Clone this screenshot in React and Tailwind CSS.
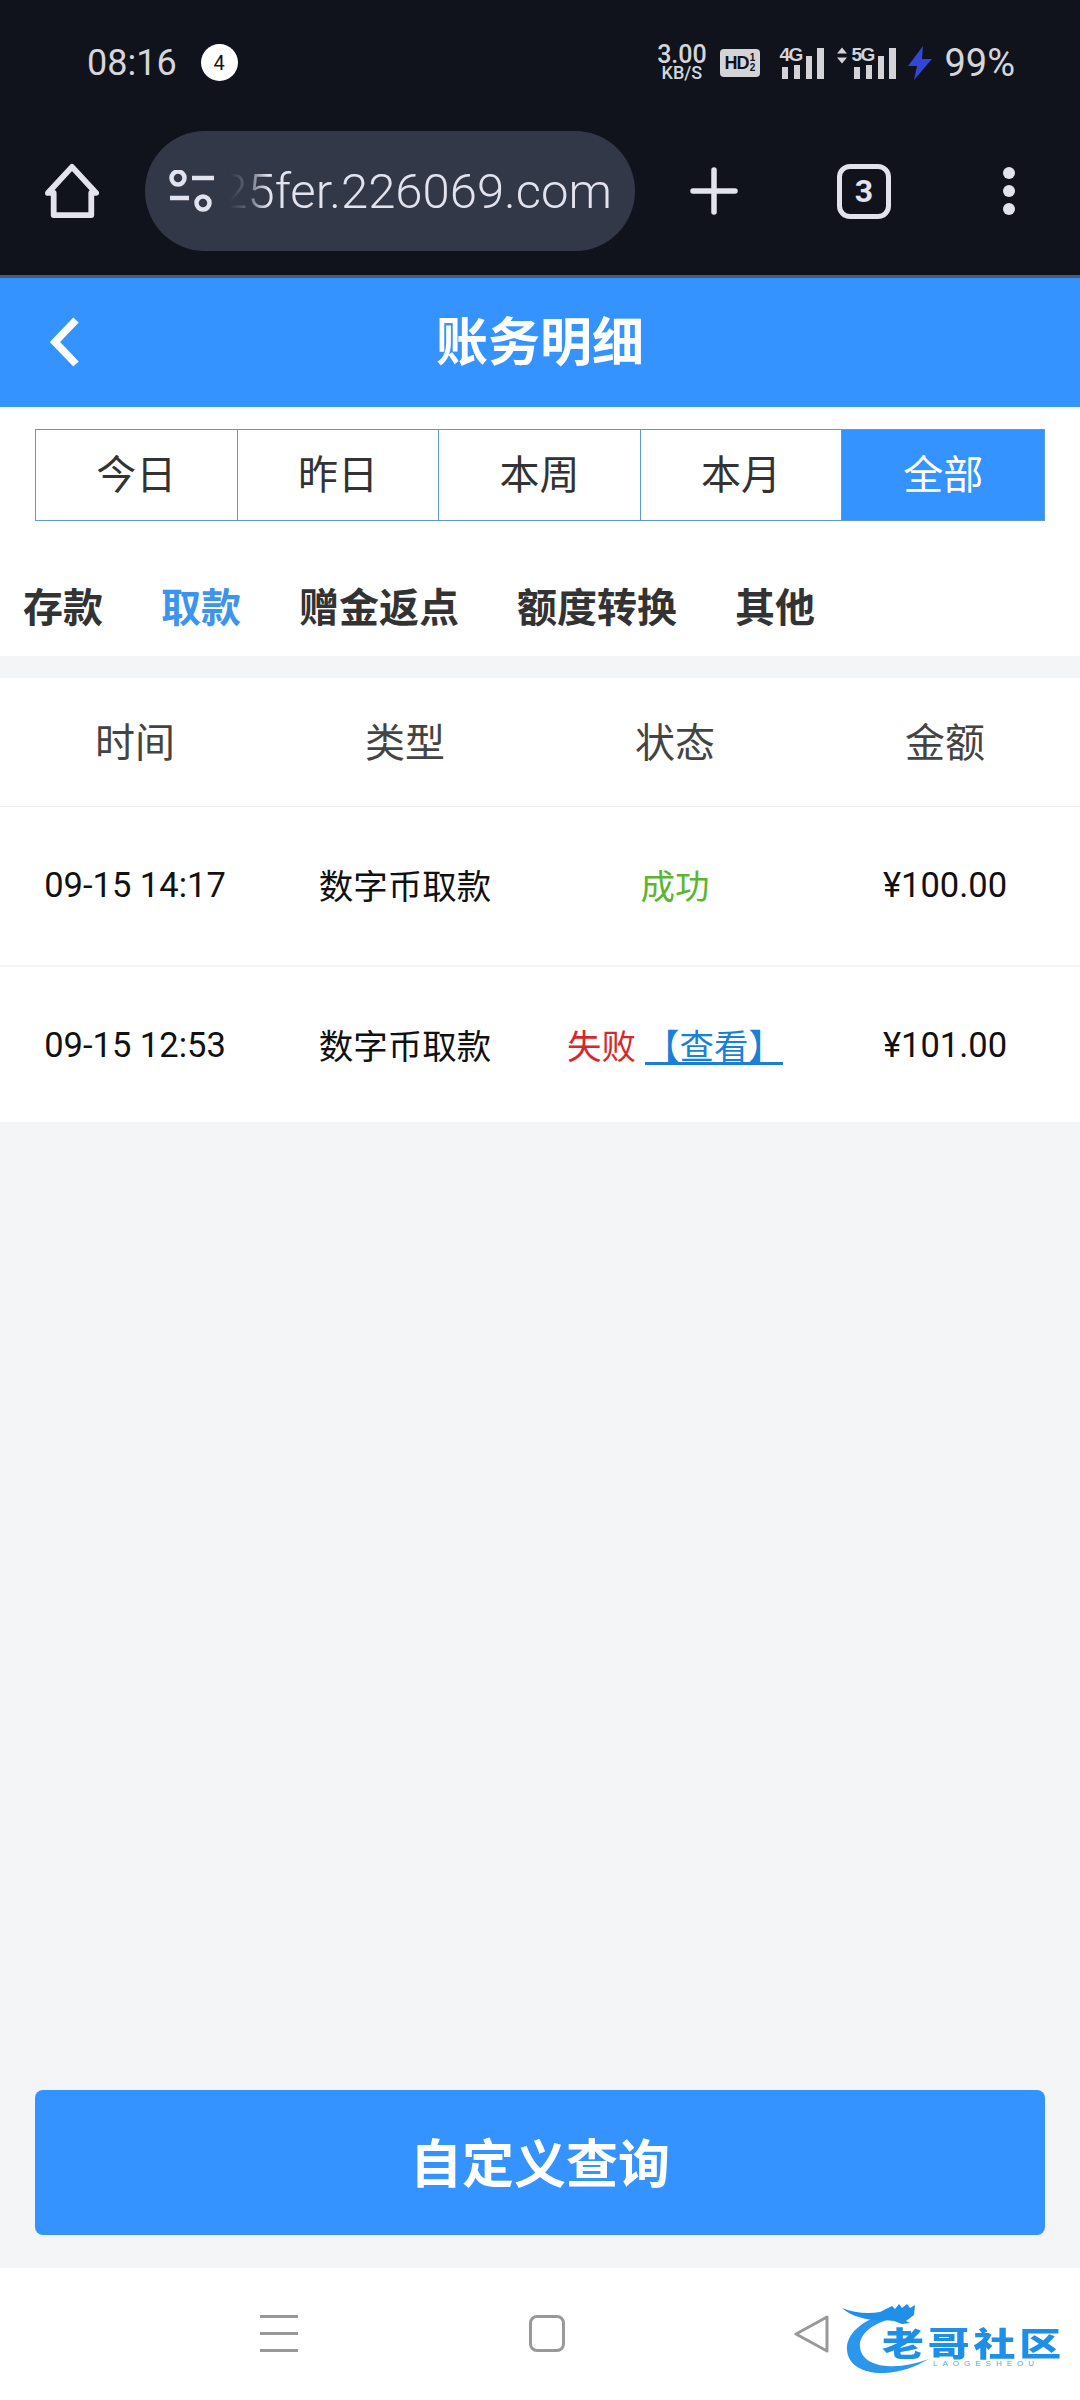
import React from 'react';

const ranges = ['今日', '昨日', '本周', '本月', '全部'];
const tabs = ['存款', '取款', '赠金返点', '额度转换', '其他'];
const columns = ['时间', '类型', '状态', '金额'];
const records = [
    { time: '09-15 14:17', type: '数字币取款', amount: '¥100.00', ok: true },
    { time: '09-15 12:53', type: '数字币取款', amount: '¥101.00', ok: false },
];

const Signal = ({ label, arrows }) => (
    <div className="relative flex items-end h-[32px]">
        {arrows && (
            <svg width="12" height="17" viewBox="0 0 12 16" className="absolute left-[-15px] top-[0px]" fill="#d4d4d8">
                <path d="M6 0l5 6H1zM6 16l-5-6h10z" />
            </svg>
        )}
        <span className="absolute left-0 top-[-2px] text-[19px] leading-[20px] font-bold text-[#d4d4d8] [font-family:'Liberation_Sans',sans-serif] tracking-[-1.5px]">{label}</span>
        <svg width="45" height="32" viewBox="0 0 45 32" fill="#d4d4d8">
            <rect x="3" y="20" width="6" height="12" />
            <rect x="15" y="18" width="6" height="14" />
            <rect x="27" y="9" width="6" height="23" />
            <rect x="38" y="1" width="7" height="31" />
        </svg>
    </div>
);

const StatusBar = () => (
    <div className="h-[125px] flex items-center pl-[87px] pr-[65px] text-[#d5d5da]">
        <span className="text-[36px] leading-none [font-family:Roboto,sans-serif]">08:16</span>
        <span className="ml-[24px] w-[37px] h-[37px] rounded-full bg-white text-[#111] text-[20px] flex items-center justify-center [font-family:Roboto,sans-serif]">4</span>
        <div className="ml-auto flex items-center [font-family:Roboto,sans-serif]">
            <div className="flex flex-col items-center w-[51px] font-medium">
                <span className="text-[25px] leading-[21px]">3.00</span>
                <span className="text-[18px] leading-[16px]">KB/S</span>
            </div>
            <div className="ml-[13px] w-[40px] h-[28px] rounded-[4px] bg-[#d4d4d8] text-[#111218] flex items-center justify-center text-[18px] font-bold leading-none tracking-[-1px] [font-family:'Liberation_Sans',sans-serif]">
                HD<span className="text-[10px] leading-[10px] w-[8px] text-center tracking-normal">1<br />2</span>
            </div>
            <div className="ml-[19px]"><Signal label="4G" /></div>
            <div className="ml-[27px]"><Signal label="5G" arrows /></div>
            <svg width="26" height="36" viewBox="0 0 26 34" className="ml-[11px]" fill="#3346d6">
                <path d="M16 0L1 20h9L7 34l18-21h-10z" />
            </svg>
            <span className="ml-[11px] text-[38px] leading-none">99%</span>
        </div>
    </div>
);

const BrowserBar = () => (
    <div className="h-[150px] flex items-start pt-[6px] text-[#e3e3ef]">
        <div className="w-[145px] h-[120px] flex items-center pl-[45px]">
            <svg width="54" height="58" viewBox="0 0 56 58" fill="none" stroke="#e3e3ef" strokeWidth="6" strokeLinejoin="round" strokeLinecap="round">
                <path d="M3 31L28 4l25 27h-5v23H9V31z" />
            </svg>
        </div>
        <div className="relative w-[490px] h-[120px] rounded-[60px] bg-[#333849] flex items-center overflow-hidden pl-[23px]">
            <svg width="46" height="42" viewBox="0 0 46 42" fill="none" stroke="#e3e3ef" strokeWidth="4.5" className="shrink-0">
                <circle cx="10" cy="8" r="6.5" />
                <circle cx="35" cy="33" r="6.5" />
                <path d="M24 8h22M2 28h19" />
            </svg>
            <div className="relative w-[382px] ml-[16px] overflow-hidden flex justify-end">
                <span className="text-[49px] leading-none whitespace-nowrap [font-family:Roboto,sans-serif] font-light">25fer.226069.com</span>
                <div className="absolute left-0 top-0 bottom-0 w-[38px] bg-gradient-to-r from-[#333849] via-[#333849]/70 to-transparent" />
            </div>
        </div>
        <div className="flex-1 flex items-center h-[120px]">
            <svg width="48" height="48" viewBox="0 0 48 48" className="ml-[55px]" stroke="#e3e3ef" strokeWidth="5.5" strokeLinecap="round">
                <path d="M24 3v42M3 24h42" />
            </svg>
            <div className="ml-[99px] w-[54px] h-[55px] rounded-[13px] border-[5px] border-[#e3e3ef] flex items-center justify-center text-[32px] font-bold leading-none [font-family:Roboto,sans-serif]">3</div>
            <div className="ml-[112px] flex flex-col gap-[6px]">
                <div className="w-[12px] h-[12px] rounded-full bg-[#e3e3ef]" />
                <div className="w-[12px] h-[12px] rounded-full bg-[#e3e3ef]" />
                <div className="w-[12px] h-[12px] rounded-full bg-[#e3e3ef]" />
            </div>
        </div>
    </div>
);

const Logo = () => (
    <div className="absolute left-[838px] top-[2300px] w-[232px] h-[80px]">
        <svg width="232" height="80" viewBox="0 0 232 80" className="absolute left-0 top-0 blur-[0.5px]" fill="none">
            {/* dragon body, thin at the head and thick along the bottom */}
            <path d="M46 15C24 20 8 34 9 50c1 16 18 24 38 23 16-1 30-6 44-14-14 5-28 8-42 7-14-1-26-7-27-19-1-12 10-22 30-28z" fill="#2a97ec" />
            <path d="M4 8c12 5 26 6 38 4 4-2 8-4 12-6l3 3 4-5 3 4 5-4 3 4 5-3-1 10-8 6 4 2-8 1-8-3-10-1c-14 1-33-3-42-12z" fill="#1f8fea" />
        </svg>
        <span className="absolute left-[44px] top-[26px] text-[33px] leading-[32px] font-black text-[#1e8fe8] whitespace-nowrap tracking-[3px] scale-x-[1.27] origin-left blur-[0.4px] [font-family:'Noto_Sans_CJK_SC',sans-serif]">老哥社区</span>
        <span className="absolute left-[95px] top-[60px] text-[8px] leading-[8px] text-[#5aaaea] whitespace-nowrap tracking-[5px] [font-family:'Liberation_Sans',sans-serif]">LAOGESHEOU</span>
    </div>
);

const App = () => {
    return (
        <div className="relative w-[1080px] h-[2400px] flex flex-col bg-[#f4f5f7] overflow-hidden [font-family:'Noto_Sans_CJK_SC',sans-serif]">
            <div className="bg-[#11131c] border-b-[3px] border-[#4a5a78]">
                <StatusBar />
                <BrowserBar />
            </div>

            {/* header */}
            <div className="h-[129px] bg-[#3593ff] flex items-center relative justify-center pb-[8px]">
                <svg width="36" height="52" viewBox="0 0 36 52" className="absolute left-[47px] top-[38px]" fill="none" stroke="#fff" strokeWidth="7.5">
                    <path d="M29 4L8 26l21 22" />
                </svg>
                <h1 className="text-[52px] font-bold text-white leading-none">账务明细</h1>
            </div>

            <div className="bg-white h-[249px] flex flex-col">
                <div className="mx-[35px] mt-[22px] h-[92px] grid grid-cols-5 border border-[#5b9bd5]">
                    {ranges.map((r, i) => (
                        <div key={r} className={`flex items-center justify-center text-[40px] leading-none pb-[7px] ${i === 4 ? 'bg-[#3593ff] text-white' : 'text-[#333] border-r border-[#5b9bd5]'}`}>{r}</div>
                    ))}
                </div>
                <div className="flex gap-[58px] pl-[23px] mt-[64px]">
                    {tabs.map((t, i) => (
                        <span key={t} className={`text-[40px] font-bold leading-none ${i === 1 ? 'text-[#3d94ee]' : 'text-[#333]'}`}>{t}</span>
                    ))}
                </div>
            </div>

            <div className="mt-[22px] bg-white">
                <div className="h-[129px] grid grid-cols-4 items-center text-center text-[40px] text-[#444] border-b border-[#eeeeee] pb-[4px]">
                    {columns.map(c => <span key={c}>{c}</span>)}
                </div>
                {records.map((row, i) => (
                    <div key={row.time} className={`grid grid-cols-4 items-center text-center text-[34.5px] text-[#111] ${i === 0 ? 'h-[160px] border-b-2 border-[#f4f4f5]' : 'h-[155px] pt-[2px]'}`}>
                        <span className="[font-family:Roboto,sans-serif]">{row.time}</span>
                        <span className="pb-[2px]">{row.type}</span>
                        {row.ok ? (
                            <span className="text-[#5cb531] pb-[2px]">成功</span>
                        ) : (
                            <span className="whitespace-nowrap pb-[2px]">
                                <span className="text-[#d9262b]">失败</span>
                                <span className="ml-[9px] text-[#1a7fd8] underline decoration-[3px] underline-offset-[3px]">【查看】</span>
                            </span>
                        )}
                        <span className="[font-family:Roboto,sans-serif]">{row.amount}</span>
                    </div>
                ))}
            </div>

            <button className="mt-auto mx-[35px] h-[145px] rounded-[8px] bg-[#3593ff] text-white text-[52px] font-bold pb-[3px]">自定义查询</button>

            {/* system nav */}
            <div className="mt-[33px] h-[132px] bg-white flex items-start pt-[47px] pl-[260px]">
                <div className="w-[38px] h-[37px] flex flex-col justify-between">
                    <div className="h-[3px] bg-[#999]" />
                    <div className="h-[3px] bg-[#999]" />
                    <div className="h-[3px] bg-[#999]" />
                </div>
                <div className="ml-[231px] w-[36px] h-[37px] rounded-[8px] border-[3px] border-[#999]" />
                <svg width="36" height="38" viewBox="0 0 36 38" className="ml-[229px]" fill="none" stroke="#999" strokeWidth="3" strokeLinejoin="round">
                    <path d="M33 2v34L2 19z" />
                </svg>
            </div>
            <Logo />
        </div>
    );
};

export default App;
